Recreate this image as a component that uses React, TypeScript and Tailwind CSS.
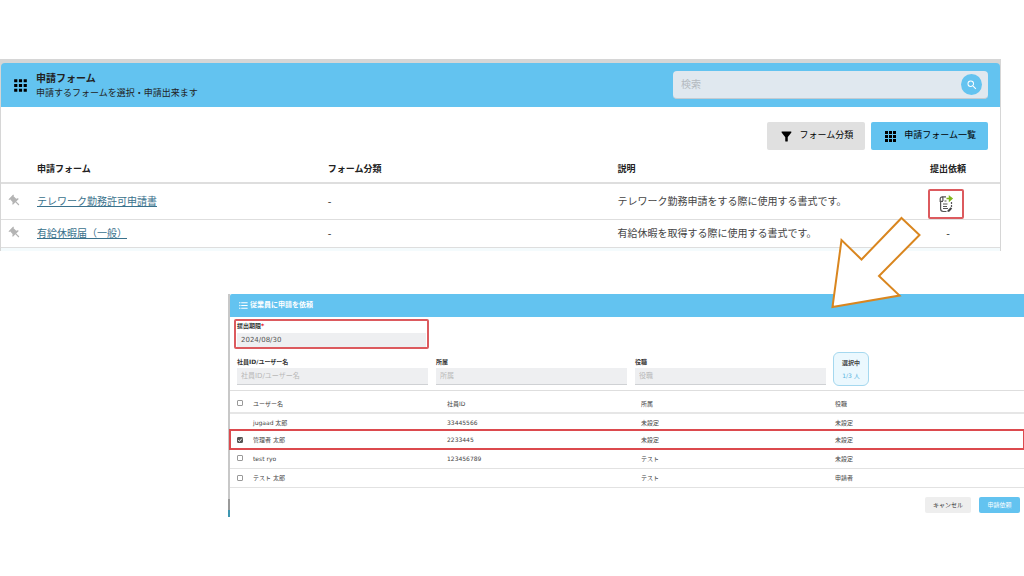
import React from "react";
import { MdApps, MdFilterAlt, MdSearch, MdFormatListBulleted, MdPushPin } from "react-icons/md";

const forms = [
  { name: "テレワーク勤務許可申請書", category: "-", description: "テレワーク勤務申請をする際に使用する書式です。", request: true },
  { name: "有給休暇届（一般）", category: "-", description: "有給休暇を取得する際に使用する書式です。", request: false },
];

const users = [
  { name: "jugaad 太郎", id: "33445566", dept: "未設定", role: "未設定", box: false, checked: false },
  { name: "管理者 太郎", id: "2233445", dept: "未設定", role: "未設定", box: true, checked: true },
  { name: "test ryo", id: "123456789", dept: "テスト", role: "未設定", box: true, checked: false },
  { name: "テスト 太郎", id: "", dept: "テスト", role: "申請者", box: true, checked: false },
];

const filters = [
  { id: "f-user", label: "社員ID/ユーザー名" },
  { id: "f-dept", label: "所属" },
  { id: "f-role", label: "役職" },
];

function GridIcon() {
  return (
    <svg viewBox="0 0 11 11" className="block size-[11px] fill-black" aria-hidden="true">
      {[0, 4, 8].map((x) => [0, 4, 8].map((y) => <rect key={`${x}-${y}`} x={x} y={y} width="3" height="3" />))}
    </svg>
  );
}

function RequestIcon() {
  return (
    <svg viewBox="0 0 16 18" className="block h-[18px] w-4 fill-none" aria-hidden="true">
      <path d="M8 1.8H4.5Q2.2 1.8 2.2 4V6.3H5M4.9 6V3.5Q4.9 1.8 4 1.8M2.6 6.5V13.8Q2.6 16.5 5.3 16.5H8.5" stroke="#555" strokeWidth="1.2" />
      <path d="M13.5 7V9M13.5 10V12" stroke="#555" strokeWidth="1.2" />
      <path d="M6.5 6H8.5M5 9H9.5M5 11.5H9M5 13.5H10" stroke="#555" strokeWidth="1.1" />
      <path d="M9.8 15.2L12.6 12.2L14.2 13.4L11.6 16.5L9.6 16.9Z" fill="#444" />
      <path d="M8.5 3.5H12M11.5 1.5L14 3.5L11.5 5.7Z" stroke="#7fb51c" strokeWidth="1.4" fill="#7fb51c" />
    </svg>
  );
}

function FormList() {
  return (
    <section className="mr-[23px] border-x border-t-4 border-[#d6d6d6] bg-[#d6d6d6]">
      <header className="flex h-11 items-center rounded-t bg-[#63c3f0] px-3">
        <MdApps className="-ml-[2px] size-[19px] text-black" />
        <div className="ml-[6px] flex-1 pt-px text-[#222]">
          <h1 className="text-[10px] leading-[14px] font-bold">申請フォーム</h1>
          <p className="text-[9px] leading-[14px]">申請するフォームを選択・申請出来ます</p>
        </div>
        <div className="flex h-7 w-[315px] items-center rounded-sm border-b border-[#c3cbd2] bg-[#e0e8ef] pr-[6px] pl-2">
          <input aria-label="検索" placeholder="検索" className="min-w-0 flex-1 bg-transparent text-[10px] outline-none placeholder:text-[#b4bac0]" />
          <button aria-label="検索する" className="flex size-[21px] items-center justify-center rounded-full bg-[#63c3f0] text-white">
            <MdSearch className="size-3" />
          </button>
        </div>
      </header>
      <div className="bg-white">
        <div className="flex justify-end gap-[6px] pt-[15px] pr-3 text-[9px]">
          <button className="flex h-7 items-center gap-[6px] rounded-xs bg-[#e0e0e0] px-3 text-black">
            <MdFilterAlt className="size-[15px]" />
            フォーム分類
          </button>
          <button className="flex h-7 items-center gap-2 rounded-xs bg-[#63c3f0] pr-3 pl-[14px] text-black">
            <GridIcon />
            申請フォーム一覧
          </button>
        </div>
        <table className="w-full table-fixed border-collapse text-left text-[10px] text-[#444]">
          <colgroup>
            <col className="w-9" />
            <col className="w-[29.1%]" />
            <col className="w-[29%]" />
            <col />
            <col className="w-[104px]" />
          </colgroup>
          <thead className="text-[9px] text-[#222]">
            <tr className="h-[33px] border-b-2 border-[#dedede]">
              <th></th>
              <th className="p-0 pt-2">申請フォーム</th>
              <th className="p-0 pt-2">フォーム分類</th>
              <th className="p-0 pt-2">説明</th>
              <th className="p-0 pt-2 text-center">提出依頼</th>
            </tr>
          </thead>
          <tbody>
            {forms.map((f) => (
              <tr key={f.name} className="h-9 border-b border-[#dedede] last:h-7">
                <td className="p-0 pl-[7px]">
                  <MdPushPin className="size-[14px] -rotate-45 text-[#b4b4b4]" />
                </td>
                <td className="p-0"><a href="#" className="text-[#39718c] underline">{f.name}</a></td>
                <td className="p-0">{f.category}</td>
                <td className="p-0">{f.description}</td>
                {f.request ? (
                  <td className="p-0 pr-1 align-bottom">
                    <button aria-label="提出を依頼" className="mx-auto flex h-[30px] w-9 items-center justify-center rounded-xs border-2 border-[#dc5a5e]">
                      <RequestIcon />
                    </button>
                  </td>
                ) : (
                  <td className="p-0 text-center">-</td>
                )}
              </tr>
            ))}
          </tbody>
        </table>
        <div className="h-[3px] bg-[#f4fbfd]" />
      </div>
    </section>
  );
}

const field = "block h-[17px] w-full border-b border-[#cfd1d4] bg-[#eeeff1] px-1 text-[7px] text-[#555] outline-none placeholder:text-[#b8b8b8]";
const tick = "block size-[6px] appearance-none rounded-[1px] border border-[#999] bg-white";

function RequestDialog() {
  return (
    <section className="mt-[43px] ml-[228px] flex text-[6px] text-[#444]">
      <div className="flex w-[2px] flex-col bg-[#c8c8c8]">
        <div className="mt-auto h-[11px] bg-[#9a9a9a]" />
        <div className="h-[7px] bg-[#3f96b0]" />
      </div>
      <div className="min-w-0 flex-1 bg-white">
        <header className="flex h-[23px] items-center gap-px rounded-tl-xs bg-[#63c3f0] pl-2 text-white">
          <MdFormatListBulleted className="size-[11px]" />
          <h2 className="text-[7px] leading-[10px] font-bold">従業員に申請を依頼</h2>
        </header>
        <div className="ml-1 pt-[2px]">
          <div className="h-[30px] w-[195px] rounded-xs border-2 border-[#dc5a5e] px-px">
            <label htmlFor="due" className="block h-3 leading-[10px] font-bold text-[#333]">
              提出期限<span className="text-red-600">*</span>
            </label>
            <input id="due" defaultValue="2024/08/30" className="block h-[14px] w-full bg-[#eeeff1] px-1 text-[7px] text-[#555] outline-none" />
          </div>
        </div>
        <div className="flex h-[41px] items-end gap-2 pb-[5px] pl-[7px]">
          {filters.map((f) => (
            <div key={f.id} className="w-[191px]">
              <label htmlFor={f.id} className="block h-[11px] leading-[10px] font-bold text-[#333]">{f.label}</label>
              <input id={f.id} placeholder={f.label} className={field} />
            </div>
          ))}
          <div className="-mb-px -ml-px flex h-[34px] w-9 flex-col items-center justify-center gap-1 rounded-md border border-[#a5d8ef] bg-[#ebf8fe] leading-[9px]">
            <span className="font-bold">選択中</span>
            <span className="text-[#58b4df]">1/3 人</span>
          </div>
        </div>
        <table className="w-full table-fixed border-collapse border-t border-[#dedede] text-left">
          <colgroup>
            <col className="w-[23px]" />
            <col className="w-[194px]" />
            <col className="w-[194px]" />
            <col className="w-[194px]" />
            <col />
          </colgroup>
          <thead>
            <tr className="h-[23px] border-b-2 border-[#e6e6e6]">
              <th className="p-0 pt-1 pl-[7px]"><input type="checkbox" aria-label="すべて選択" className={tick} /></th>
              <th className="p-0 pt-1 font-normal">ユーザー名</th>
              <th className="p-0 pt-1 font-normal">社員ID</th>
              <th className="p-0 pt-1 font-normal">所属</th>
              <th className="p-0 pt-1 font-normal">役職</th>
            </tr>
          </thead>
          <tbody>
            {users.map((u) => (
              <tr
                key={u.id + u.name}
                className={
                  u.checked
                    ? "h-[19px] outline-2 -outline-offset-1 outline-[#dc4a4e]"
                    : "h-[19px] border-b border-[#e2e2e2] first:h-[17px] first:border-b-0"
                }
              >
                <td className="p-0 pl-[7px]">
                  {u.box && (
                    <span className="relative block size-[6px]">
                      <input
                        type="checkbox"
                        aria-label={u.name}
                        defaultChecked={u.checked}
                        className="peer block size-[6px] appearance-none rounded-[1px] border border-[#999] bg-white checked:border-[#555] checked:bg-[#555]"
                      />
                      <svg viewBox="0 0 6 6" className="pointer-events-none absolute inset-0 hidden size-[6px] fill-none stroke-white peer-checked:block" aria-hidden="true">
                        <path d="M1.2 3.2L2.5 4.4L4.8 1.6" />
                      </svg>
                    </span>
                  )}
                </td>
                <td className="p-0">{u.name}</td>
                <td className="p-0">{u.id}</td>
                <td className="p-0">{u.dept}</td>
                <td className="p-0">{u.role}</td>
              </tr>
            ))}
          </tbody>
        </table>
        <footer className="flex justify-end gap-2 pt-[9px] pr-1 pb-1">
          <button className="h-4 w-[46px] rounded-xs bg-[#eeeeee] text-[#333]">キャンセル</button>
          <button className="h-4 w-[41px] rounded-xs bg-[#63c3f0] text-white">申請依頼</button>
        </footer>
      </div>
    </section>
  );
}

export default function App() {
  return (
    <main className="relative min-h-screen bg-white pt-[59px] font-['DejaVu_Sans','Noto_Sans_CJK_JP',sans-serif]" lang="ja">
      <FormList />
      <RequestDialog />
      <svg viewBox="0 0 92 94" className="pointer-events-none absolute top-[215px] left-[830px] h-[94px] w-[92px] fill-white stroke-[#d9861f] stroke-2" aria-hidden="true">
        <path d="M71.5 3L89.5 20L49 61L69.5 80.5L2.5 92L11.5 25L31.5 44.5Z" />
      </svg>
    </main>
  );
}
